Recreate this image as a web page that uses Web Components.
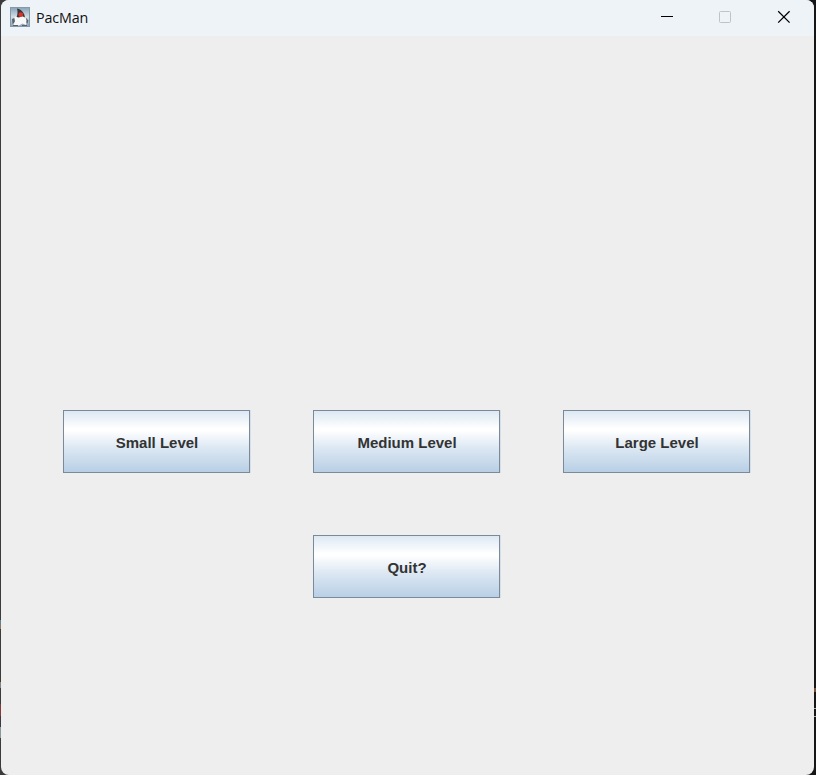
<!DOCTYPE html>
<html lang="en">
<head>
<meta charset="utf-8">
<title>PacMan</title>
<style>
html,body{margin:0;height:100%;overflow:hidden}
body{background:
  linear-gradient(#765139,#765139) 100% 688px/2px 4px no-repeat,
  linear-gradient(#aaa,#aaa) 100% 708px/2px 1px no-repeat,
  linear-gradient(#aaa,#aaa) 100% 716px/2px 1px no-repeat,
  linear-gradient(#4688a0,#a66f45) 0 620px/1px 9px no-repeat,
  linear-gradient(#aa7952,#5f8da8) 0 682px/1px 6px no-repeat,
  linear-gradient(#793c40,#8c3937) 0 704px/1px 12px no-repeat,
  linear-gradient(#849a9d,#849a9d) 0 727px/1px 11px no-repeat,
  linear-gradient(90deg,#3b3b3d 0 50%,#161616 50%)}
</style>
</head>
<body>
<app-window>
  <title-bar slot="title">PacMan</title-bar>
  <level-menu>
    <metal-button>Small Level</metal-button>
    <metal-button>Medium Level</metal-button>
    <metal-button>Large Level</metal-button>
    <metal-button class="quit">Quit?</metal-button>
  </level-menu>
</app-window>
<script>
class Base extends HTMLElement {
  constructor() {
    super();
    this.attachShadow({ mode: "open" }).innerHTML = this.constructor.markup;
  }
}

class AppWindow extends Base {
  static markup = `
  <style>
    :host{display:block;height:100vh;padding:0 2px 0 1px;box-sizing:border-box}
    .frame{height:100%;display:flex;flex-direction:column;background:#eee;border-radius:8px;overflow:hidden}
  </style>
  <div class="frame"><slot name="title"></slot><slot></slot></div>`;
}

class JavaIcon extends Base {
  static markup = `
  <style>:host{display:block;width:20px;height:20px}svg{display:block}</style>
  <svg width="20" height="20" viewBox="0 0 20 20">
    <defs><linearGradient id="g" x2="0" y2="1">
      <stop offset="0" stop-color="#88a3b9"/><stop offset=".5" stop-color="#d3dee7"/><stop offset="1" stop-color="#86a1b8"/>
    </linearGradient></defs>
    <rect x=".5" y=".5" width="19" height="19" fill="url(#g)" stroke="#8499aa"/>
    <path d="M2 12 L4.5 11 L5 15 L2.5 17Z M16 11 L18.5 13.5 L17.5 16.5 L15.5 15Z" fill="#5b6268"/>
    <path d="M4.5 10 L8 8.5 L14.5 9.5 L16.5 13 L16 18 L12.5 16.5 L9 18.5 L3.5 18 L5 14Z" fill="#f7f8f8"/>
    <path d="M7 1.5 L9.5 2.2 C12 3.5 14.5 6 15 10.5 L12 9 L9 10.5 L6.5 10 C7.5 8 8 5 7 1.5Z" fill="#33363a"/>
    <circle cx="10.8" cy="7.7" r="2.4" fill="#df3028"/>
    <path d="M3 18.5 H8 M12 18.5 H17" stroke="#59616a"/>
  </svg>`;
}

class CaptionIcons extends Base {
  static markup = `
  <style>:host{display:flex}svg{display:block}</style>
  <svg width="58" height="34"><path d="M21 16.5H33" stroke="#000"/></svg>
  <svg width="58" height="34"><rect x="21.5" y="11.5" width="11" height="11" rx="1" fill="none" stroke="#bfc3c7"/></svg>
  <svg width="60" height="34"><path d="M22.2 11.2 L33.6 22.6 M33.6 11.2 L22.2 22.6" stroke="#000" stroke-width="1.25"/></svg>`;
}

class TitleBar extends Base {
  static markup = `
  <style>
    :host{display:flex;height:36px;flex:none;background:#eef3f8;padding-left:9px;box-sizing:border-box;
      font:15px/20px "Open Sans","Noto Sans",sans-serif;color:#111}
    java-icon{margin-top:7px}
    .name{display:block;margin:8px auto 0 6px;font-size:14.3px;letter-spacing:-.15px}
    caption-icons{margin-right:-2px}
  </style>
  <java-icon></java-icon><span class="name"><slot></slot></span><caption-icons></caption-icons>`;
}

class LevelMenu extends Base {
  static markup = `
  <style>
    :host{display:grid;grid-template-columns:repeat(3,187px);grid-auto-rows:63px;
      gap:62px 63px;padding:374px 0 0 62px}
    ::slotted(.quit){grid-column:2}
  </style>
  <slot></slot>`;
}

class MetalButton extends Base {
  static markup = `
  <style>
    :host{display:block}
    button{width:100%;height:100%;margin:0;padding:2px 0 0 1px;box-sizing:border-box;border:1px solid #7a8a99;border-radius:0;
      background:linear-gradient(#dde8f3 0,#fff 29%,#fff 32%,#dde8f3 60%,#b8cfe5 100%);
      box-shadow:1px 0 #d4dfea;
      font:bold 15px/18px "Liberation Sans",Arial,sans-serif;color:#333}
  </style>
  <button><slot></slot></button>`;
}

customElements.define("java-icon", JavaIcon);
customElements.define("caption-icons", CaptionIcons);
customElements.define("title-bar", TitleBar);
customElements.define("metal-button", MetalButton);
customElements.define("level-menu", LevelMenu);
customElements.define("app-window", AppWindow);
</script>
</body>
</html>
